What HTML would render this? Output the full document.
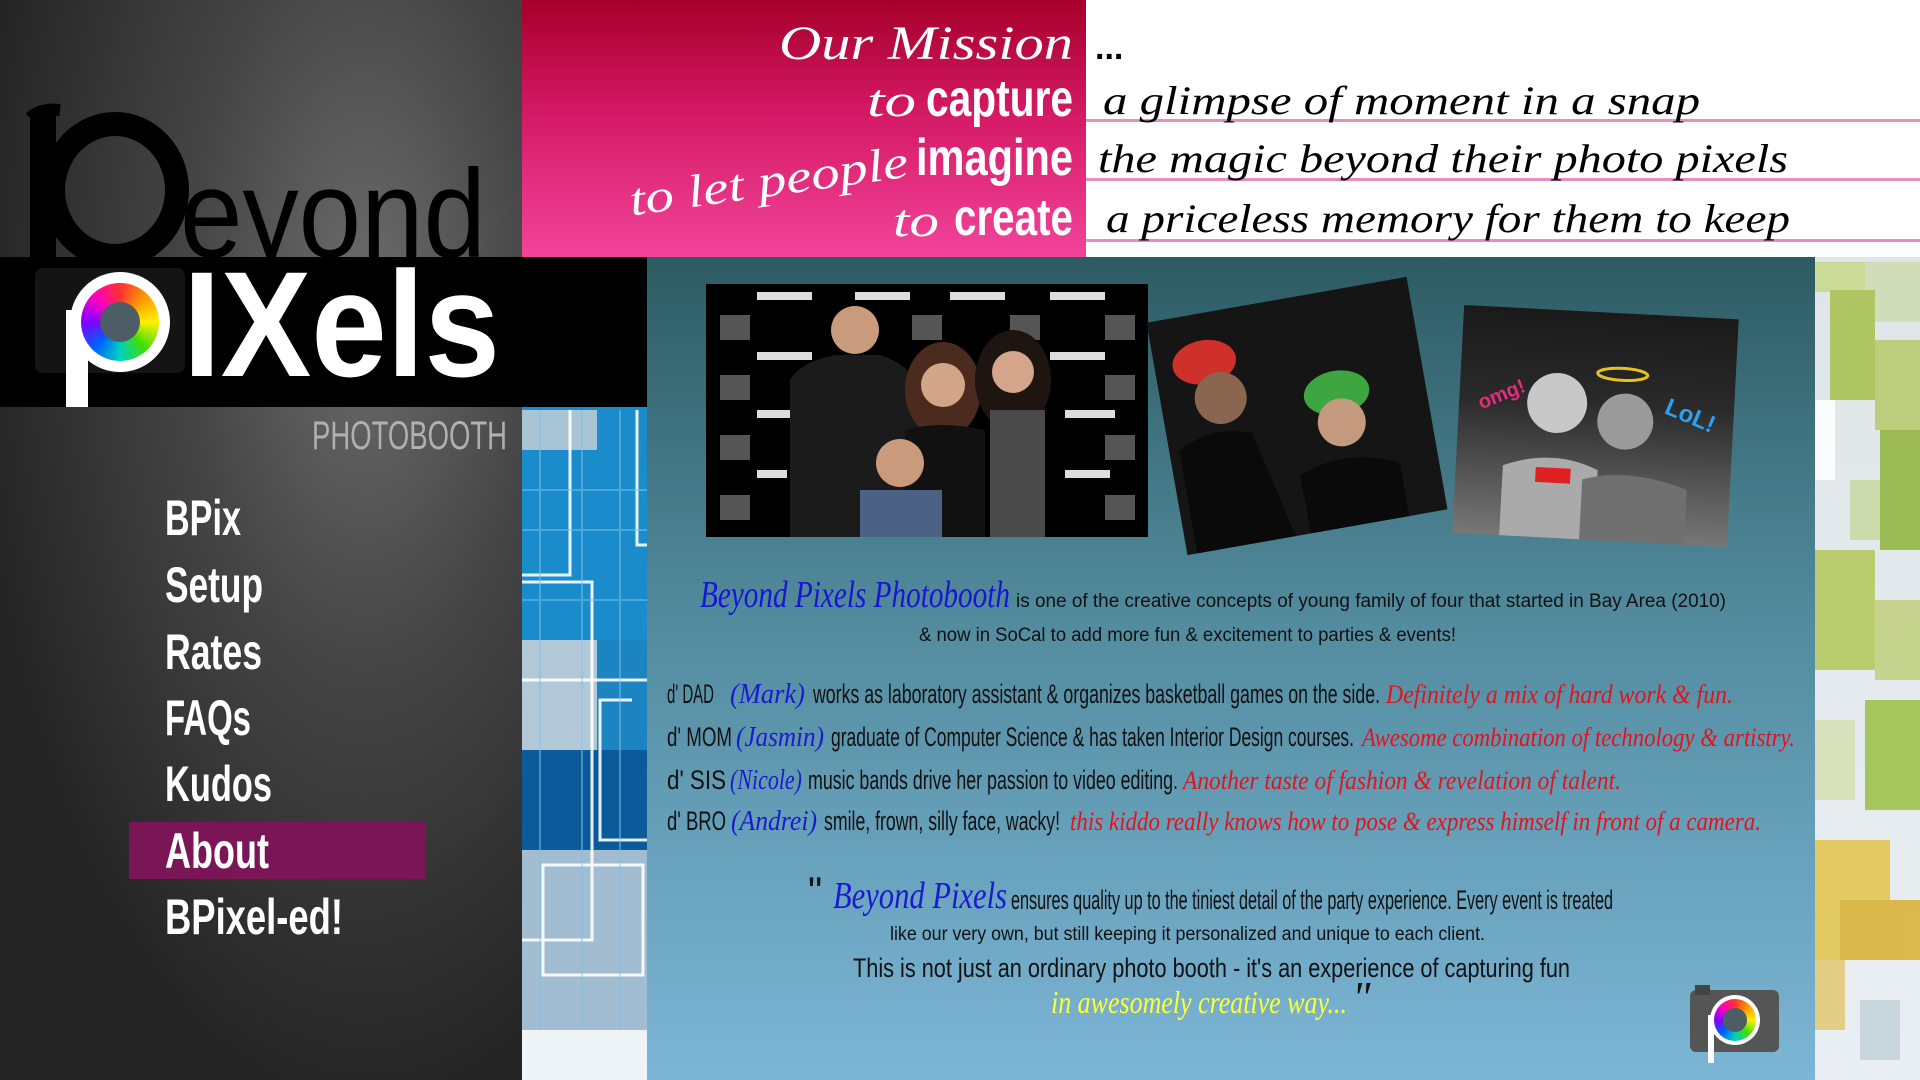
<!DOCTYPE html>
<html><head><meta charset="utf-8"><style>
html,body{margin:0;padding:0;width:1920px;height:1080px;overflow:hidden;background:#222}
svg{display:block}
.n{font-family:"Liberation Sans Narrow","Liberation Sans",sans-serif}
.s{font-family:"Liberation Serif",serif;font-style:italic}
</style></head><body>
<svg width="1920" height="1080" viewBox="0 0 1920 1080" xmlns="http://www.w3.org/2000/svg">
<defs>
<radialGradient id="side" cx="0.7" cy="0.28" r="0.75">
<stop offset="0" stop-color="#6c6c6c"/><stop offset="0.45" stop-color="#454545"/><stop offset="1" stop-color="#242424"/></radialGradient>
<linearGradient id="pink" x1="0" y1="0" x2="0" y2="1"><stop offset="0" stop-color="#a6002a"/><stop offset="0.45" stop-color="#d51a66"/><stop offset="1" stop-color="#f2449a"/></linearGradient>
<linearGradient id="main" x1="0" y1="0" x2="0" y2="1"><stop offset="0" stop-color="#2d5b63"/><stop offset="0.45" stop-color="#538c9f"/><stop offset="1" stop-color="#7cb6d6"/></linearGradient>
<linearGradient id="right" x1="0" y1="0" x2="0" y2="1"><stop offset="0" stop-color="#dfe6e8"/><stop offset="1" stop-color="#e8eef2"/></linearGradient>
<linearGradient id="p3" x1="0" y1="0" x2="0" y2="1"><stop offset="0" stop-color="#1a1a1a"/><stop offset="0.4" stop-color="#2a2a2a"/><stop offset="1" stop-color="#777"/></linearGradient>
</defs>
<!-- sidebar -->
<rect x="0" y="0" width="522" height="1080" fill="url(#side)"/>
<!-- Beyond logo -->
<rect x="30" y="112" width="26" height="145" fill="#000"/>
<path d="M30 118 Q40 108 60 110" stroke="#000" stroke-width="12" fill="none"/>
<ellipse cx="115" cy="190" rx="62" ry="66" fill="none" stroke="#000" stroke-width="24"/>
<text x="180" y="257" font-family="Liberation Sans,sans-serif" font-size="125" fill="#000" textLength="306" lengthAdjust="spacingAndGlyphs">eyond</text>
<!-- black band -->
<rect x="0" y="257" width="647" height="150" fill="#000"/>
<rect x="35" y="268" width="150" height="105" rx="8" fill="#141414"/>
<text x="183" y="376" font-family="Liberation Sans,sans-serif" font-weight="bold" font-size="150" fill="#fff" textLength="317" lengthAdjust="spacingAndGlyphs">IXels</text>
<rect x="66" y="310" width="22" height="97" fill="#fff"/>
<circle cx="120" cy="322" r="50" fill="#fff"/>
<foreignObject x="81" y="283" width="78" height="78"><div xmlns="http://www.w3.org/1999/xhtml" style="width:78px;height:78px;border-radius:50%;background:conic-gradient(#ff3030,#ff9a00,#fff000,#40e000,#00d0c0,#0060ff,#8000ff,#ff00c0,#ff3030)"></div></foreignObject>
<circle cx="120" cy="322" r="20" fill="#4d5d66"/>
<text x="312" y="449" class="n" font-size="40" fill="#b0b0b0" textLength="195" lengthAdjust="spacingAndGlyphs">PHOTOBOOTH</text>
<!-- menu -->
<rect x="129" y="822" width="297" height="57" fill="#7a1656"/>
<g class="n" font-size="50" fill="#fff" font-weight="bold">
<text x="165" y="535" textLength="76" lengthAdjust="spacingAndGlyphs">BPix</text>
<text x="165" y="602" textLength="98" lengthAdjust="spacingAndGlyphs">Setup</text>
<text x="165" y="669" textLength="97" lengthAdjust="spacingAndGlyphs">Rates</text>
<text x="165" y="735" textLength="86" lengthAdjust="spacingAndGlyphs">FAQs</text>
<text x="165" y="801" textLength="107" lengthAdjust="spacingAndGlyphs">Kudos</text>
<text x="165" y="868" textLength="104" lengthAdjust="spacingAndGlyphs">About</text>
<text x="165" y="934" textLength="178" lengthAdjust="spacingAndGlyphs">BPixel-ed!</text>
</g>
<!-- blue strip -->
<rect x="522" y="407" width="125" height="673" fill="#1a8ccc"/>
<rect x="522" y="410" width="75" height="40" fill="#a9c4d4"/>
<rect x="522" y="640" width="75" height="110" fill="#b3c8d6"/>
<rect x="597" y="640" width="50" height="110" fill="#1c84c0"/>
<rect x="522" y="750" width="125" height="100" fill="#0b5a9a"/>
<rect x="522" y="850" width="125" height="180" fill="#a2bcd2"/>
<rect x="522" y="1030" width="125" height="50" fill="#eef4f8"/>
<g stroke="#fff" stroke-width="3" fill="none" opacity="0.9">
<path d="M522 575H570V410"/><path d="M522 582H592V940H522"/><path d="M522 680H647"/><path d="M632 700H600V840H647"/><path d="M543 865H643V975H543Z"/><path d="M637 410V545H647"/>
</g>
<g stroke="#7fc3ea" stroke-width="2" opacity="0.5"><path d="M522 490H647M522 530H647M522 600H647M540 410V1030M582 410V1030M620 410V1030"/></g>
<!-- pink banner -->
<rect x="522" y="0" width="564" height="257" fill="url(#pink)"/>
<rect x="1086" y="0" width="834" height="257" fill="#fff"/>
<g fill="#e98cc4"><rect x="1086" y="119" width="834" height="3"/><rect x="1086" y="178" width="834" height="3"/><rect x="1086" y="239" width="834" height="3"/></g>
<g class="s" fill="#fff">
<text x="779" y="59" font-size="48" textLength="294" lengthAdjust="spacingAndGlyphs">Our Mission</text>
<text x="867" y="116" font-size="46" textLength="49" lengthAdjust="spacingAndGlyphs">to</text>
<text x="628" y="196" font-size="46" textLength="281" lengthAdjust="spacingAndGlyphs" transform="rotate(-8 770 180)">to let people</text>
<text x="893" y="236" font-size="46" textLength="46" lengthAdjust="spacingAndGlyphs">to</text>
</g>
<g class="n" fill="#fff" font-size="52" font-weight="bold">
<text x="926" y="116" textLength="147" lengthAdjust="spacingAndGlyphs">capture</text>
<text x="916" y="175" textLength="157" lengthAdjust="spacingAndGlyphs">imagine</text>
<text x="954" y="235" textLength="119" lengthAdjust="spacingAndGlyphs">create</text>
</g>
<text x="1095" y="59" font-family="Liberation Sans,sans-serif" font-weight="bold" font-size="34" fill="#000">...</text>
<g class="s" fill="#000" font-size="40">
<text x="1103" y="114" textLength="597" lengthAdjust="spacingAndGlyphs">a glimpse of moment in a snap</text>
<text x="1098" y="172" textLength="690" lengthAdjust="spacingAndGlyphs">the magic beyond their photo pixels</text>
<text x="1106" y="232" textLength="684" lengthAdjust="spacingAndGlyphs">a priceless memory for them to keep</text>
</g>
<!-- main panel -->
<rect x="647" y="257" width="1168" height="823" fill="url(#main)"/>
<!-- right pattern -->
<rect x="1815" y="257" width="105" height="823" fill="url(#right)"/>
<g opacity="0.85">
<rect x="1815" y="262" width="50" height="30" fill="#c8d88a"/><rect x="1865" y="262" width="55" height="60" fill="#cfdcb0"/>
<rect x="1830" y="290" width="45" height="110" fill="#a6c04a"/><rect x="1875" y="340" width="45" height="90" fill="#b8c968"/>
<rect x="1815" y="400" width="20" height="80" fill="#ffffff"/><rect x="1880" y="430" width="40" height="120" fill="#8fb23a"/>
<rect x="1850" y="480" width="30" height="60" fill="#c9d9a0"/>
<rect x="1815" y="550" width="60" height="120" fill="#b4c859"/><rect x="1875" y="600" width="45" height="80" fill="#c2cf7d"/>
<rect x="1865" y="700" width="55" height="110" fill="#9dbf44"/><rect x="1815" y="720" width="40" height="80" fill="#d6e0b4"/>
<rect x="1815" y="840" width="75" height="120" fill="#e2c44a"/><rect x="1840" y="900" width="80" height="60" fill="#d9b030"/>
<rect x="1815" y="960" width="30" height="70" fill="#e0c870"/><rect x="1860" y="1000" width="40" height="60" fill="#c5d2da"/>
</g>
<!-- photo 1 -->
<rect x="706" y="284" width="442" height="253" fill="#000"/>
<g fill="#555"><rect x="720" y="315" width="30" height="25"/><rect x="720" y="375" width="30" height="25"/><rect x="720" y="435" width="30" height="25"/><rect x="720" y="495" width="30" height="25"/><rect x="1105" y="315" width="30" height="25"/><rect x="1105" y="375" width="30" height="25"/><rect x="1105" y="435" width="30" height="25"/><rect x="1105" y="495" width="30" height="25"/><rect x="912" y="315" width="30" height="25"/><rect x="1010" y="315" width="30" height="25"/></g>
<g fill="#ddd"><rect x="757" y="292" width="55" height="8"/><rect x="855" y="292" width="55" height="8"/><rect x="950" y="292" width="55" height="8"/><rect x="1050" y="292" width="55" height="8"/><rect x="757" y="352" width="55" height="8"/><rect x="1050" y="352" width="55" height="8"/><rect x="757" y="410" width="55" height="8"/><rect x="1065" y="410" width="50" height="8"/><rect x="757" y="470" width="30" height="8"/><rect x="1065" y="470" width="45" height="8"/></g>
<circle cx="855" cy="330" r="24" fill="#c99a7c"/><path d="M790 537V380Q800 362 835 355H880Q912 365 918 390V537Z" fill="#1b1b1b"/>
<ellipse cx="943" cy="390" rx="38" ry="48" fill="#4a2b1e"/><circle cx="943" cy="385" r="22" fill="#d2a488"/><path d="M905 537V430Q940 420 985 430V537Z" fill="#111"/>
<ellipse cx="1013" cy="380" rx="38" ry="50" fill="#1e1410"/><circle cx="1013" cy="372" r="21" fill="#d4a58a"/><path d="M990 537V410H1045V537Z" fill="#4a4a4a"/>
<circle cx="900" cy="463" r="24" fill="#c99a7c"/><path d="M860 537V490H942V537Z" fill="#4c6285"/>
<!-- photo 2 -->
<g transform="rotate(-10 1297 416)"><rect x="1165" y="298" width="264" height="236" fill="#151515"/>
<ellipse cx="1215" cy="347" rx="32" ry="22" fill="#d0302a"/><circle cx="1225" cy="385" r="26" fill="#8a6650"/><path d="M1175 534V430Q1210 410 1250 425L1275 534Z" fill="#0a0a0a"/>
<ellipse cx="1340" cy="400" rx="33" ry="22" fill="#3ea640"/><circle cx="1340" cy="430" r="24" fill="#c39a7e"/><path d="M1290 534V475Q1340 455 1390 480V534Z" fill="#0a0a0a"/></g>
<!-- photo 3 -->
<g transform="rotate(3 1595 426)"><rect x="1458" y="312" width="275" height="228" fill="url(#p3)"/>
<circle cx="1556" cy="405" r="30" fill="#c8c8c8"/><path d="M1505 540V470Q1555 450 1600 470V540Z" fill="#aaa"/>
<circle cx="1625" cy="420" r="28" fill="#9a9a9a"/><path d="M1585 540V480Q1630 465 1690 485V540Z" fill="#707070"/>
<rect x="1538" y="470" width="35" height="15" fill="#e02020"/><ellipse cx="1620" cy="373" rx="25" ry="6" fill="none" stroke="#e8c020" stroke-width="3"/>
<text x="1475" y="410" font-size="20" fill="#e82a7c" font-weight="bold" font-family="Liberation Sans,sans-serif" transform="rotate(-25 1490 400)">omg!</text>
<text x="1665" y="415" font-size="24" fill="#2aa0f0" font-weight="bold" font-family="Liberation Sans,sans-serif" transform="rotate(20 1680 405)">LoL!</text></g>
<!-- body text -->
<g class="s" fill="#1616d6"><text x="700" y="607" font-size="38" textLength="310" lengthAdjust="spacingAndGlyphs">Beyond Pixels Photobooth</text></g>
<g class="n" fill="#111">
<text x="1016" y="607" font-size="19" textLength="710" lengthAdjust="spacingAndGlyphs">is one of the creative concepts of young family of four that started in Bay Area (2010)</text>
<text x="919" y="641" font-size="19" textLength="537" lengthAdjust="spacingAndGlyphs">&amp; now in SoCal to add more fun &amp; excitement to parties &amp; events!</text>
<g font-size="27">
<text x="667" y="703" textLength="47" lengthAdjust="spacingAndGlyphs">d' DAD</text>
<text x="813" y="703" textLength="567" lengthAdjust="spacingAndGlyphs">works as laboratory assistant &amp; organizes basketball games on the side.</text>
<text x="667" y="746" textLength="65" lengthAdjust="spacingAndGlyphs">d' MOM</text>
<text x="831" y="746" textLength="523" lengthAdjust="spacingAndGlyphs">graduate of Computer Science &amp; has taken Interior Design courses.</text>
<text x="667" y="789" textLength="59" lengthAdjust="spacingAndGlyphs">d' SIS</text>
<text x="808" y="789" textLength="370" lengthAdjust="spacingAndGlyphs">music bands drive her passion to video editing.</text>
<text x="667" y="830" textLength="59" lengthAdjust="spacingAndGlyphs">d' BRO</text>
<text x="824" y="830" textLength="236" lengthAdjust="spacingAndGlyphs">smile, frown, silly face, wacky!</text>
<text x="1011" y="909" textLength="602" lengthAdjust="spacingAndGlyphs">ensures quality up to the tiniest detail of the party experience.  Every event is treated</text>
<text x="853" y="977" textLength="717" lengthAdjust="spacingAndGlyphs">This is not just an ordinary photo booth - it's an experience of capturing fun</text>
</g>
<text x="890" y="940" font-size="19" textLength="595" lengthAdjust="spacingAndGlyphs">like our very own, but still keeping it personalized and unique to each client.</text>
<text x="808" y="905" font-size="40" font-family="Liberation Sans,sans-serif">"</text>
<text x="1352" y="1012" font-size="44" font-family="Liberation Serif,serif" font-style="italic">"</text>
</g>
<g class="s" fill="#1a1ad0" font-size="28">
<text x="730" y="703" textLength="75" lengthAdjust="spacingAndGlyphs">(Mark)</text>
<text x="736" y="746" textLength="88" lengthAdjust="spacingAndGlyphs">(Jasmin)</text>
<text x="730" y="789" textLength="72" lengthAdjust="spacingAndGlyphs">(Nicole)</text>
<text x="731" y="830" textLength="86" lengthAdjust="spacingAndGlyphs">(Andrei)</text>
<text x="833" y="908" font-size="38" textLength="174" lengthAdjust="spacingAndGlyphs">Beyond Pixels</text>
</g>
<g class="s" fill="#e0141e" font-size="26">
<text x="1386" y="703" textLength="347" lengthAdjust="spacingAndGlyphs">Definitely a mix of hard work &amp; fun.</text>
<text x="1362" y="746" textLength="433" lengthAdjust="spacingAndGlyphs">Awesome combination of technology &amp; artistry.</text>
<text x="1183" y="789" textLength="438" lengthAdjust="spacingAndGlyphs">Another taste of fashion &amp; revelation of talent.</text>
<text x="1070" y="830" textLength="691" lengthAdjust="spacingAndGlyphs">this kiddo really knows how to pose &amp; express himself in front of a camera.</text>
</g>
<text x="1051" y="1013" class="s" fill="#ffff33" font-size="32" textLength="296" lengthAdjust="spacingAndGlyphs">in awesomely creative way...</text>
<!-- camera logo -->
<rect x="1690" y="990" width="89" height="62" rx="6" fill="#555"/><rect x="1695" y="985" width="15" height="10" fill="#444"/>
<circle cx="1735" cy="1020" r="25" fill="#fff"/>
<foreignObject x="1714" y="999" width="42" height="42"><div xmlns="http://www.w3.org/1999/xhtml" style="width:42px;height:42px;border-radius:50%;background:conic-gradient(#ff3030,#ff9a00,#fff000,#40e000,#00d0c0,#0060ff,#8000ff,#ff00c0,#ff3030)"></div></foreignObject>
<circle cx="1735" cy="1020" r="12" fill="#4d5d66"/><rect x="1708" y="1015" width="6" height="48" fill="#fff"/>
</svg>
</body></html>
